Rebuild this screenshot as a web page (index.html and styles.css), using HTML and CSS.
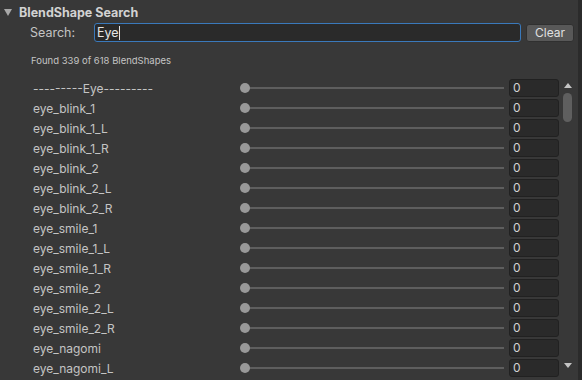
FILE: index.html
```html
<!DOCTYPE html>
<html lang="en">
<head>
    <meta charset="UTF-8">
    <title>BlendShape Search</title>
    <link rel="stylesheet" href="styles.css">
</head>
<body>
    <div class="panel">
        <div class="foldout">
            <span class="arrow"></span>
            <span class="title">BlendShape Search</span>
        </div>

        <div class="search-row">
            <label class="search-label" for="query">Search:</label>
            <div class="search-field"><span id="query">Eye</span><span class="caret"></span></div>
            <button class="clear-btn" type="button">Clear</button>
        </div>

        <p class="found">Found 339 of 618 BlendShapes</p>

        <div class="list-wrap">
            <div class="list" id="list"></div>
            <div class="scrollbar">
                <span class="up"></span>
                <span class="thumb"></span>
                <span class="spacer"></span>
                <span class="down"></span>
            </div>
        </div>
    </div>

    <script>
        var names = [
            "---------Eye---------",
            "eye_blink_1", "eye_blink_1_L", "eye_blink_1_R",
            "eye_blink_2", "eye_blink_2_L", "eye_blink_2_R",
            "eye_smile_1", "eye_smile_1_L", "eye_smile_1_R",
            "eye_smile_2", "eye_smile_2_L", "eye_smile_2_R",
            "eye_nagomi", "eye_nagomi_L"
        ];
        var list = document.getElementById("list");
        names.forEach(function (n) {
            var row = document.createElement("div");
            row.className = "row";
            row.innerHTML =
                '<span class="name">' + n + '</span>' +
                '<div class="slider"><span class="knob"></span><span class="track"></span></div>' +
                '<div class="value">0</div>';
            list.appendChild(row);
        });
    </script>
</body>
</html>
```

FILE: styles.css
```css
body {
    margin: 0;
    background-color: #383838;
    font-family: Inter, "Noto Sans", sans-serif;
    font-size: 12px;
    color: #c4c4c4;
    overflow: hidden;
}

.panel {
    height: 380px;
    border-right: 4px solid #2b2b2b;
    box-sizing: border-box;
}

.foldout {
    display: flex;
    align-items: center;
    height: 23px;
    padding-left: 4px;
    padding-top: 1px;
    box-sizing: border-box;
}

.arrow {
    width: 0;
    height: 0;
    border-left: 4px solid transparent;
    border-right: 4px solid transparent;
    border-top: 7px solid #a8a8a8;
    margin-right: 7px;
    margin-top: 1px;
}

.title {
    font-weight: bold;
    font-size: 12.5px;
    color: #d2d2d2;
}

.search-row {
    display: flex;
    align-items: center;
    height: 19px;
    padding-left: 30px;
}

.search-label {
    width: 64px;
    font-size: 12.5px;
}

.search-field {
    width: 427px;
    height: 19px;
    box-sizing: border-box;
    background-color: #2a2a2a;
    border: 1px solid #3a79bb;
    border-radius: 3px;
    padding: 0 2px;
    display: flex;
    align-items: center;
    font-size: 12.5px;
    color: #e4e4e4;
}

.caret {
    width: 1px;
    height: 14px;
    background-color: #e4e4e4;
}

.clear-btn {
    margin-left: 5px;
    width: 48px;
    height: 18px;
    padding: 0;
    border: 1px solid #303030;
    border-radius: 3px;
    background-color: #585858;
    color: #e0e0e0;
    font-family: Inter, "Noto Sans", sans-serif;
    font-size: 12px;
}

.found {
    margin: 0;
    padding: 13px 0 0 31px;
    height: 23px;
    font-size: 9.5px;
    color: #c4c4c4;
}

.list-wrap {
    display: flex;
}

.list {
    width: 559px;
}

.row {
    display: flex;
    align-items: center;
    height: 20px;
}

.name {
    width: 207px;
    padding-left: 33px;
    font-size: 12px;
    color: #c4c4c4;
}

.slider {
    position: relative;
    display: flex;
    align-items: center;
    width: 264px;
    height: 20px;
}

.track {
    flex: 1;
    height: 2px;
    margin-left: 5px;
    background-color: #5e5e5e;
}

.knob {
    position: absolute;
    left: 0;
    top: 5px;
    width: 10px;
    height: 10px;
    border-radius: 50%;
    background-color: #999999;
}

.value {
    margin-left: 5px;
    width: 50px;
    height: 18px;
    box-sizing: border-box;
    background-color: #2a2a2a;
    border: 1px solid #212121;
    border-radius: 3px;
    padding-left: 3px;
    font-size: 12px;
    line-height: 16px;
    color: #d2d2d2;
}

.scrollbar {
    display: flex;
    flex-direction: column;
    align-items: center;
    width: 15px;
    height: 300px;
    margin-left: 1px;
}

.up {
    margin-top: 5px;
    border-left: 4px solid transparent;
    border-right: 4px solid transparent;
    border-bottom: 5px solid #c4c4c4;
}

.thumb {
    margin-top: 5px;
    width: 9px;
    height: 29px;
    border-radius: 5px;
    background-color: #5f5f5f;
}

.spacer {
    flex: 1;
}

.down {
    margin-bottom: 10px;
    border-left: 4px solid transparent;
    border-right: 4px solid transparent;
    border-top: 5px solid #c4c4c4;
}
```
